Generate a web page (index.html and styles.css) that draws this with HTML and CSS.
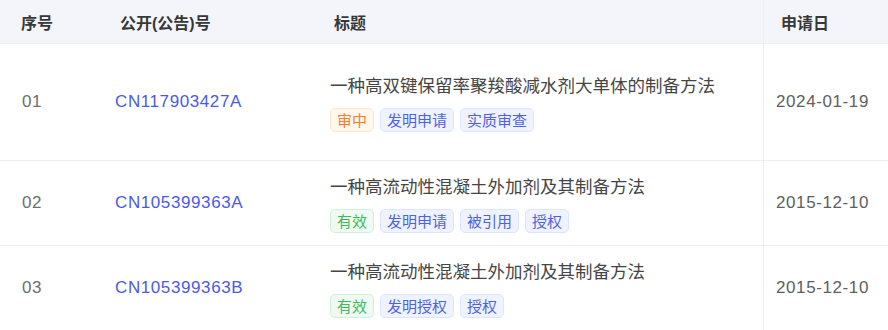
FILE: index.html
```html
<!DOCTYPE html>
<html lang="zh-CN">
<head>
<meta charset="utf-8">
<link rel="stylesheet" href="styles.css">
</head>
<body>
<div class="table">
  <div class="row head">
    <div class="cell c1">序号</div>
    <div class="cell c2">公开(公告)号</div>
    <div class="cell c3">标题</div>
    <div class="cell c4">申请日</div>
  </div>
  <div class="row body tall">
    <div class="cell c1 num">01</div>
    <div class="cell c2 link">CN117903427A</div>
    <div class="cell c3">
      <div class="title">一种高双键保留率聚羧酸减水剂大单体的制备方法</div>
      <div class="tags"><span class="tag orange">审中</span><span class="tag blue">发明申请</span><span class="tag blue">实质审查</span></div>
    </div>
    <div class="cell c4 num">2024-01-19</div>
  </div>
  <div class="row body">
    <div class="cell c1 num">02</div>
    <div class="cell c2 link">CN105399363A</div>
    <div class="cell c3">
      <div class="title">一种高流动性混凝土外加剂及其制备方法</div>
      <div class="tags"><span class="tag green">有效</span><span class="tag blue">发明申请</span><span class="tag blue">被引用</span><span class="tag blue">授权</span></div>
    </div>
    <div class="cell c4 num">2015-12-10</div>
  </div>
  <div class="row body">
    <div class="cell c1 num">03</div>
    <div class="cell c2 link">CN105399363B</div>
    <div class="cell c3">
      <div class="title">一种高流动性混凝土外加剂及其制备方法</div>
      <div class="tags"><span class="tag green">有效</span><span class="tag blue">发明授权</span><span class="tag blue">授权</span></div>
    </div>
    <div class="cell c4 num">2015-12-10</div>
  </div>
</div>
</body>
</html>
```

FILE: styles.css
```css
* { box-sizing: border-box; }
html, body { margin: 0; padding: 0; background: #fff; }
body {
  font-family: "Liberation Sans", "Noto Sans CJK SC", sans-serif;
  color: #333;
  width: 888px;
  height: 330px;
  overflow: hidden;
}
.table { display: flex; flex-direction: column; }
.row {
  display: grid;
  grid-template-columns: 93px 217px 453px 1fr;
  border-bottom: 1px solid #eceef4;
}
.cell { display: flex; align-items: center; }
.c4 { border-left: 1px solid #eceef4; }
.head { height: 44px; background: #f4f5fa; }
.head .cell { font-size: 16px; font-weight: bold; color: #383838; }
.head .c1 { padding-left: 21px; }
.head .c2 { padding-left: 27px; }
.head .c3 { padding-left: 24px; }
.head .c4 { padding-left: 17px; }
.body { height: 85px; }
.body.tall { height: 117px; }
.body .c1 { padding-left: 22px; }
.body .c2 { padding-left: 22px; }
.body .c3 { padding-left: 20px; flex-direction: column; align-items: flex-start; justify-content: center; }
.body .c4 { padding-left: 12px; }
.num { font-size: 17px; letter-spacing: 0.6px; color: #6e6e6e; }
.body .c4.num { color: #606060; }
.link { font-size: 17px; letter-spacing: 0.6px; color: #4a5ae8; }
.title { font-size: 17.5px; line-height: 24px; color: #454545; font-family: "Noto Sans CJK SC", sans-serif; }
.tags { display: flex; gap: 6px; margin-top: 11px; }
.tag {
  font-family: "Noto Sans CJK SC", sans-serif;
  font-size: 15px;
  line-height: 22px;
  padding: 0 6px;
  border: 1px solid;
  border-radius: 5px;
}
.orange { color: #f37f30; background: #fff6ec; border-color: #fde5cf; }
.blue { color: #4f5fe8; background: #eef3ff; border-color: #dbe5fd; }
.green { color: #3dba5f; background: #effbf2; border-color: #d0f1d9; }
```
